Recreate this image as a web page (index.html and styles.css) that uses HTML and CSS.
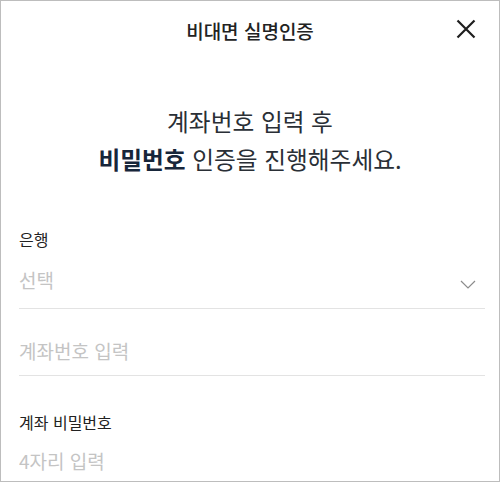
FILE: index.html
```html
<!DOCTYPE html>
<html lang="ko">
<head>
    <meta charset="UTF-8">
    <meta name="viewport" content="width=device-width, initial-scale=1.0">
    <title>비대면 실명인증</title>
    <link rel="stylesheet" href="styles.css">
</head>
<body>
    <div class="screen">
        <div class="header">
            <span></span>
            <h1 class="title">비대면 실명인증</h1>
            <button class="close" type="button" aria-label="닫기">
                <svg width="20" height="20" viewBox="0 0 20 20">
                    <path d="M1.5 1.5 L18.5 18.5 M18.5 1.5 L1.5 18.5" stroke="#1e1e1e" stroke-width="2.2" fill="none"/>
                </svg>
            </button>
        </div>

        <p class="intro">
            계좌번호 입력 후<br>
            <b>비밀번호</b> 인증을 진행해주세요.
        </p>

        <form class="form" name="fm">
            <label class="label">은행</label>
            <div class="field select">
                <span class="placeholder">선택</span>
                <svg width="16" height="9" viewBox="0 0 16 9">
                    <path d="M1 1 L8 8 L15 1" stroke="#8c8c8c" stroke-width="1.2" fill="none"/>
                </svg>
            </div>

            <div class="field second">
                <input type="text" placeholder="계좌번호 입력">
            </div>

            <label class="label pw">계좌 비밀번호</label>
            <div class="field last">
                <input type="password" placeholder="4자리 입력">
            </div>
        </form>
    </div>
</body>
</html>
```

FILE: styles.css
```css
body {
    margin: 0;
    padding: 0;
    background-color: #fff;
    font-family: "Noto Sans CJK KR", "Noto Sans", sans-serif;
    color: #222;
}
.screen {
    height: 482px;
    box-sizing: border-box;
    border: 1px solid #bdbdbd;
    overflow: hidden;
}
.header {
    display: grid;
    grid-template-columns: 1fr auto 1fr;
    align-items: center;
    height: 58px;
    padding: 0 23px;
}
.title {
    margin: 0;
    font-size: 19px;
    font-weight: 500;
    color: #222;
}
.close {
    justify-self: end;
    border: none;
    background: none;
    padding: 0;
    width: 20px;
    height: 20px;
    margin-top: -2px;
    display: flex;
}
.intro {
    margin: 43px 0 0;
    text-align: center;
    font-size: 23.7px;
    line-height: 38px;
    color: #2a2f36;
}
.intro b {
    font-weight: 700;
    color: #17263a;
}
.form {
    margin-top: 50px;
    padding: 0 14px 0 18px;
}
.label {
    display: block;
    font-size: 16px;
    color: #222;
    line-height: 22px;
}
.field {
    display: flex;
    align-items: center;
    justify-content: space-between;
    padding: 16px 0 14px;
    border-bottom: 1px solid #e3e3e3;
}
.select svg {
    margin-right: 9px;
    margin-top: 8px;
}
.placeholder, .field input {
    font-family: inherit;
    font-size: 19px;
    line-height: 28px;
    height: 28px;
    color: #c4c4c4;
}
.field input {
    border: none;
    outline: none;
    padding: 0;
    width: 100%;
    color: #222;
}
.field input::placeholder {
    color: #c4c4c4;
}
.second {
    padding: 28px 0 10px;
}
.label.pw {
    margin-top: 35px;
}
.last {
    padding-top: 14px;
}
```
